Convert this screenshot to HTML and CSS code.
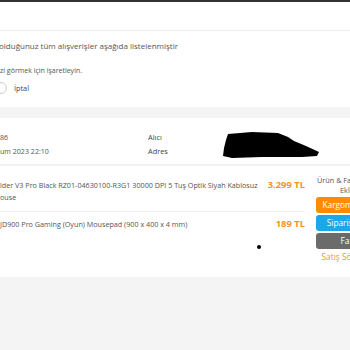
FILE: index.html
```html
<!DOCTYPE html>
<html lang="tr">
<head>
    <meta charset="UTF-8">
    <title>Siparişlerim</title>
    <link rel="stylesheet" href="styles.css">
</head>
<body>
    <div class="topbar"></div>
    <div class="head"></div>

    <!-- bilgi kutusu -->
    <div class="notice">
        <p class="lead">olduğunuz tüm alışverişler aşağıda listelenmiştir</p>
        <p class="hint">zi görmek için işaretleyin.</p>
        <label class="radio"><span class="circle"></span>İptal</label>
    </div>

    <!-- sipariş kartı -->
    <div class="order">
        <div class="order-head">
            <div class="col-no">
                <div>86</div>
                <div>um 2023 22:10</div>
            </div>
            <div class="col-labels">
                <div>Alıcı</div>
                <div>Adres</div>
            </div>
            <div class="col-hidden">
                <svg width="100" height="28" viewBox="0 0 100 28">
                    <path d="M6 3 L30 1 L56 2 L66 6 L72 10 L84 15 L97 21 L95 25 L80 26 L40 26 L10 27 L1 25 L2 17 L4 9 Z" fill="#000"/>
                </svg>
            </div>
        </div>

        <div class="items">
            <div class="item-list">
                <div class="item first">
                    <div class="name">lder V3 Pro Black RZ01-04630100-R3G1 30000 DPI 5 Tuş Optik Siyah Kablosuz<br>ouse</div>
                    <div class="price">3.299 TL</div>
                </div>
                <div class="item">
                    <div class="name">JD900 Pro Gaming (Oyun) Mousepad (900 x 400 x 4 mm)</div>
                    <div class="price">189 TL</div>
                </div>
                <div class="dot-row"><span class="dot"></span></div>
            </div>
            <div class="actions">
                <div class="actions-title">Ürün &amp; Fatura<span>Ekle</span></div>
                <div class="btn orange">Kargom Nerede</div>
                <div class="btn blue">Sipariş Detayı</div>
                <div class="btn gray">Fatura</div>
                <div class="contract">Satış Sözleşmesi</div>
            </div>
        </div>
    </div>
</body>
</html>
```

FILE: styles.css
```css
html, body {
    overflow: hidden;
}
body {
    font-family: 'Open Sans', sans-serif;
    margin: 0;
    padding: 0;
    background-color: #f4f4f4;
    color: #555;
}
.topbar {
    height: 2px;
    background-color: #333;
}
.head {
    height: 28px;
    background-color: white;
    border-bottom: 1px solid #ececec;
}
.notice {
    background-color: white;
    height: 76px;
    padding-top: 8px;
    box-sizing: border-box;
}
.notice p {
    margin: 0;
}
.lead {
    font-size: 8px;
    line-height: 14px;
    margin-left: -1px !important;
}
.hint {
    font-size: 7px;
    line-height: 12px;
    margin-top: 12px !important;
}
.radio {
    display: flex;
    align-items: center;
    font-size: 7.3px;
    line-height: 12px;
    margin-top: 5px;
    color: #444;
}
.circle {
    width: 10px;
    height: 10px;
    border: 1px solid #ccc;
    border-radius: 50%;
    margin-left: -5px;
    margin-right: 7px;
}
.order {
    background-color: white;
    margin-top: 11px;
    height: 159px;
}
.order-head {
    display: flex;
    padding: 12px 0 5px;
    border-bottom: 2px solid #f2f2f2;
    font-size: 7.1px;
    line-height: 14px;
}
.col-no {
    width: 148px;
    flex-shrink: 0;
}
.col-labels {
    width: 74px;
    flex-shrink: 0;
    font-size: 7.4px;
    color: #444;
}
.col-hidden svg {
    display: block;
    margin-top: 1px;
}
.items {
    display: flex;
}
.item-list {
    width: 305px;
    flex-shrink: 0;
}
.item {
    display: flex;
    justify-content: space-between;
    font-size: 7.2px;
    line-height: 12px;
    padding: 6px 0;
}
.item.first {
    padding: 13px 0 8px;
    border-bottom: 1px solid #f0f0f0;
}
.name {
    white-space: nowrap;
}
.price {
    color: #f7931e;
    font-weight: bold;
    font-size: 9.4px;
    white-space: nowrap;
}
.dot-row {
    padding: 9px 0 0 257px;
}
.dot {
    display: block;
    width: 4px;
    height: 4px;
    background-color: #000;
    border-radius: 50%;
}
.actions {
    width: 74px;
    flex-shrink: 0;
    margin-left: 11px;
    padding-top: 9px;
    text-align: center;
    font-size: 8.3px;
    line-height: 10px;
    white-space: nowrap;
}
.actions-title {
    text-align: left;
    padding-left: 1px;
    margin-bottom: 2px;
    font-size: 7.3px;
}
.actions-title span {
    display: block;
    padding-left: 23px;
}
.btn {
    height: 16px;
    line-height: 16px;
    border-radius: 3px;
    color: white;
    margin-bottom: 2px;
}
.orange { background-color: #ff8c00; }
.blue { background-color: #1ca7e8; }
.gray { background-color: #6b6b6b; }
.contract {
    color: #f7931e;
    margin-top: 3px;
}
```
